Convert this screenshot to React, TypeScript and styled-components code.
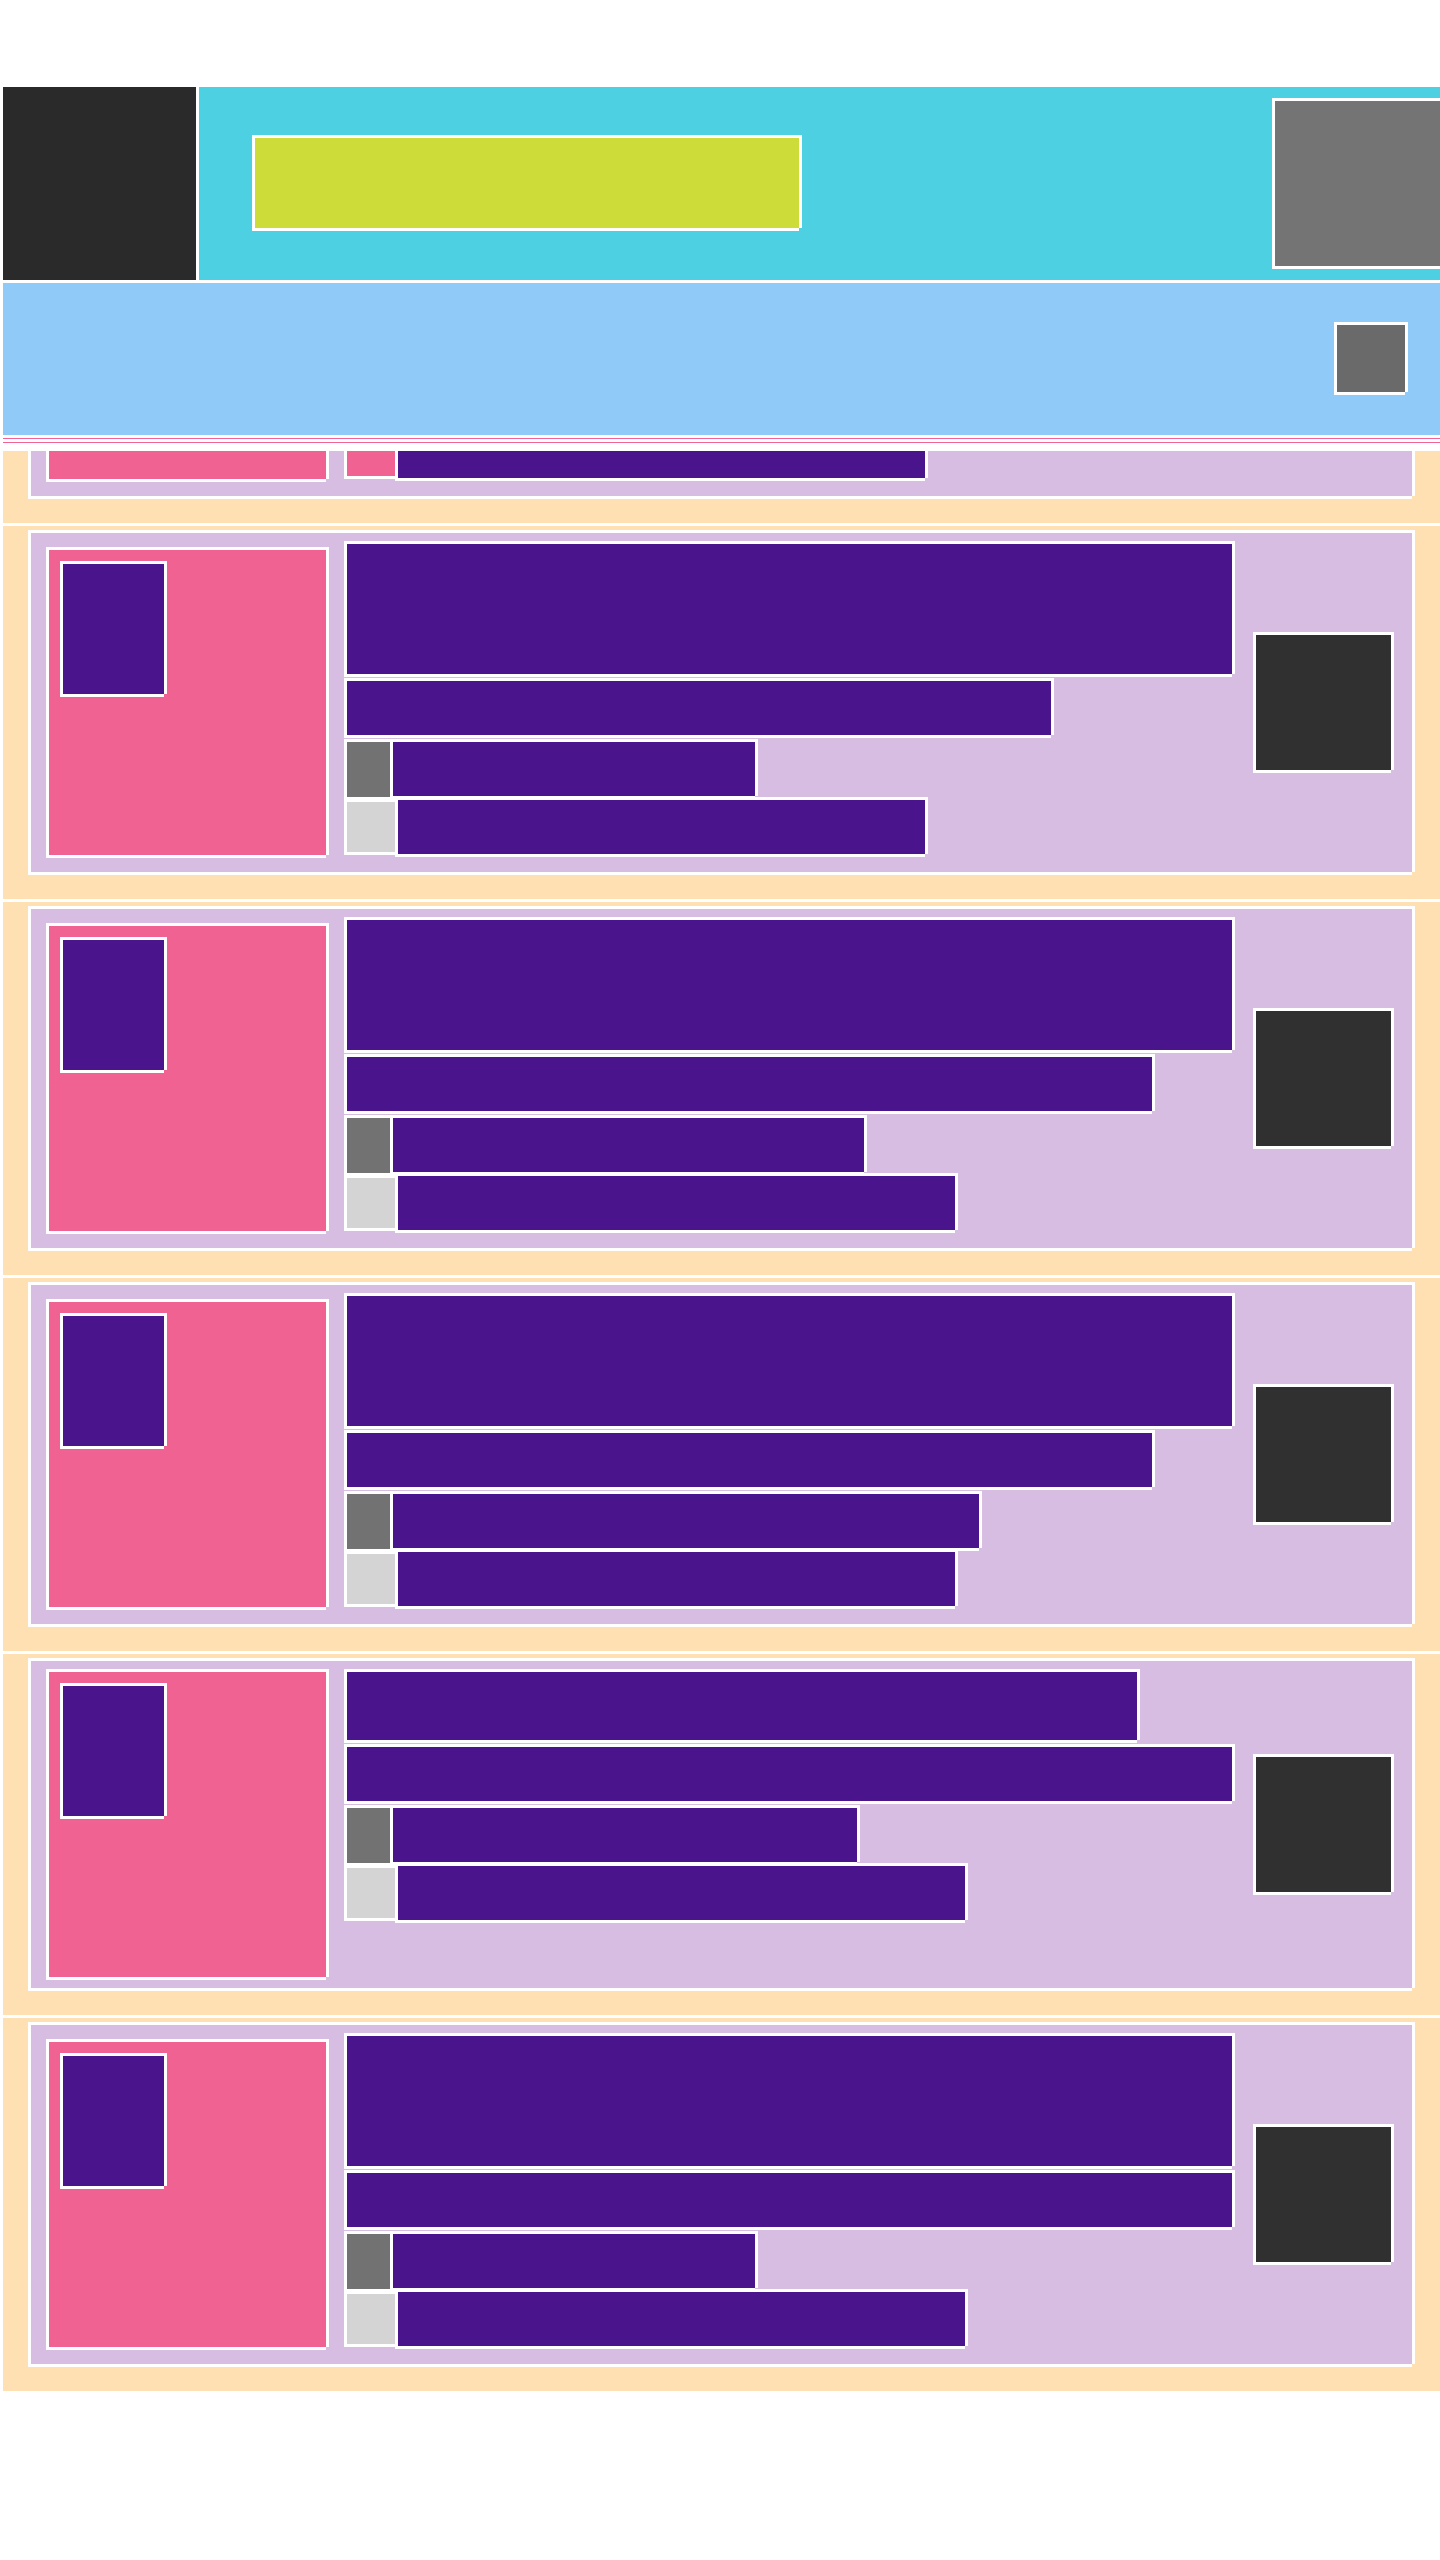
import React from "react";
import styled, { createGlobalStyle, css } from "styled-components";

const color = {
  ink: "#2a2a2a",
  button: "#303030",
  toolbar: "#4dd0e1",
  title: "#cddc39",
  filter: "#90caf9",
  grey: "#747474",
  greyDark: "#6a6a6a",
  icon: "#727272",
  iconLight: "#d4d4d4",
  row: "#ffe0b2",
  card: "#d7bde2",
  image: "#f06292",
  text: "#4a148c",
  line: "#ffffff",
};

const GlobalStyle = createGlobalStyle`
  *, *::before, *::after { box-sizing: border-box; }
  body {
    margin: 0;
    background: ${color.line};
    font-family: Roboto, "Liberation Sans", sans-serif;
  }
  button { padding: 0; border-radius: 0; cursor: pointer; }
`;

/* White frame whose bottom-right corner is left open. */
const framed = css`
  border: 3px solid ${color.line};
  clip-path: polygon(
    0 0,
    100% 0,
    100% calc(100% - 3px),
    calc(100% - 3px) calc(100% - 3px),
    calc(100% - 3px) 100%,
    0 100%
  );
`;

const Page = styled.div`
  padding: 87px 0 0 3px;
  overflow: hidden;
`;

const Toolbar = styled.header`
  display: flex;
  align-items: center;
  background: ${color.toolbar};
`;

const NavButton = styled.button`
  flex: none;
  width: 196px;
  height: 193px;
  border: 0;
  border-right: 3px solid ${color.line};
  background: ${color.ink};
`;

const Title = styled.div`
  ${framed}
  width: 550px;
  height: 96px;
  margin: 0 0 1px 53px;
  background: ${color.title};
`;

const MenuButton = styled.button`
  flex: none;
  width: 168px;
  height: 171px;
  margin-left: auto;
  border: 3px solid ${color.line};
  border-right: 0;
  background: ${color.grey};
`;

const FilterBar = styled.div`
  display: flex;
  justify-content: flex-end;
  margin-top: 3px;
  padding: 39px 32px 40px;
  background: ${color.filter};
`;

const FilterButton = styled.button`
  ${framed}
  width: 74px;
  height: 73px;
  background: ${color.greyDark};
`;

const Dividers = styled.div`
  height: 5px;
  margin: 3px 0 8px;
  border: solid ${color.image};
  border-width: 1px 0;
`;

const List = styled.ul`
  display: flex;
  flex-direction: column;
  gap: 3px;
  margin: 0;
  padding: 0;
  list-style: none;
`;

const Row = styled.li<{ $scrolled?: boolean }>`
  display: flex;
  align-items: flex-end;
  padding: 4px 25px 24px;
  background: ${color.row};
  ${({ $scrolled }) =>
    $scrolled &&
    css`
      height: 72px;
      padding-top: 0;
      overflow: hidden;
    `}
`;

const Card = styled.article`
  ${framed}
  display: flex;
  align-items: center;
  flex: 1;
  min-width: 0;
  padding: 8px 18px 8px 15px;
  background: ${color.card};
`;

const Thumbnail = styled.div`
  ${framed}
  flex: none;
  width: 283px;
  height: 311px;
  padding: 11px;
  background: ${color.image};
`;

const Badge = styled.div`
  ${framed}
  width: 107px;
  height: 136px;
  background: ${color.text};
`;

const Details = styled.div`
  display: flex;
  flex-direction: column;
  align-self: flex-start;
  gap: 1px;
  flex: 1;
  min-width: 0;
  padding-bottom: 7px;
  margin: 0 18px 0 15px;
`;

const TextBlock = styled.div<{ $width?: number; $height?: number }>`
  ${framed}
  width: ${({ $width }) => ($width ? `${$width}px` : "100%")};
  max-width: 100%;
  height: ${({ $height = 60 }) => $height}px;
  background: ${color.text};
`;

const Meta = styled.div`
  display: flex;
  align-items: flex-start;

  ${TextBlock} {
    margin-left: -3px;
  }
`;

const LastMeta = styled(Meta)`
  align-items: center;
  margin-top: -4px;
`;

const MetaIcon = styled.div`
  flex: none;
  width: 49px;
  height: 61px;
  border: 3px solid ${color.line};
  background: ${color.icon};
`;

const StatusIcon = styled(MetaIcon)<{ $active?: boolean }>`
  width: 54px;
  height: 56px;
  background: ${({ $active }) => ($active ? color.image : color.iconLight)};
`;

const ActionButton = styled.button`
  ${framed}
  flex: none;
  width: 141px;
  height: 141px;
  background: ${color.button};
`;

type Item = {
  title?: number;
  titleHeight: number;
  subtitle?: number;
  place: number;
  status: number;
  active?: boolean;
  scrolled?: boolean;
};

const items: Item[] = [
  { titleHeight: 136, subtitle: 710, place: 368, status: 533, active: true, scrolled: true },
  { titleHeight: 136, subtitle: 710, place: 368, status: 533 },
  { titleHeight: 136, subtitle: 811, place: 477, status: 563 },
  { titleHeight: 136, subtitle: 811, place: 592, status: 563 },
  { title: 796, titleHeight: 74, place: 470, status: 573 },
  { titleHeight: 136, place: 368, status: 573 },
];

function ListItem({ item }: { item: Item }) {
  return (
    <Row $scrolled={item.scrolled}>
      <Card>
        <Thumbnail>
          <Badge />
        </Thumbnail>
        <Details>
          <TextBlock $width={item.title} $height={item.titleHeight} />
          <TextBlock $width={item.subtitle} />
          <Meta>
            <MetaIcon />
            <TextBlock $width={item.place} />
          </Meta>
          <LastMeta>
            <StatusIcon $active={item.active} />
            <TextBlock $width={item.status} />
          </LastMeta>
        </Details>
        <ActionButton type="button" aria-label="Item options" />
      </Card>
    </Row>
  );
}

export default function App() {
  return (
    <>
      <GlobalStyle />
      <Page>
        <Toolbar>
          <NavButton type="button" aria-label="Back" />
          <Title />
          <MenuButton type="button" aria-label="Menu" />
        </Toolbar>
        <FilterBar>
          <FilterButton type="button" aria-label="Filter" />
        </FilterBar>
        <Dividers />
        <List>
          {items.map((item, index) => (
            <ListItem key={index} item={item} />
          ))}
        </List>
      </Page>
    </>
  );
}
